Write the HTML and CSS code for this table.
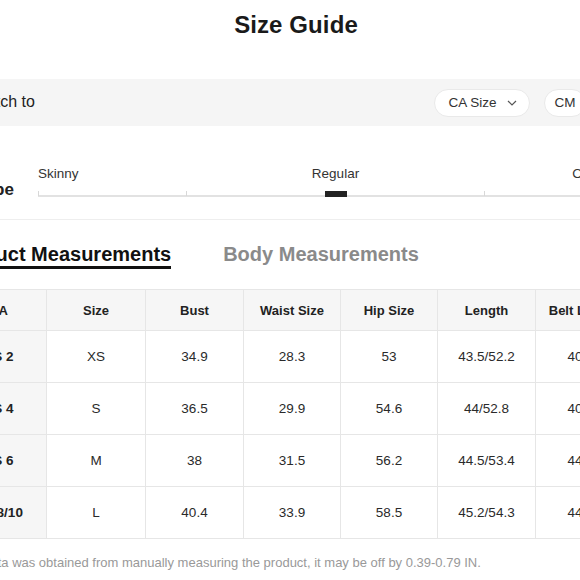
FILE: index.html
```html
<!DOCTYPE html>
<html lang="en">
<head>
<meta charset="utf-8">
<title>Size Guide</title>
<link rel="stylesheet" href="styles.css">
</head>
<body>
<div class="page">
  <h1 class="title">Size Guide</h1>

  <div class="switch-bar">
    <span class="switch-label">Switch to</span>
    <div class="switch-controls">
      <button class="pill pill-size">CA Size
        <svg class="chev" width="10" height="6" viewBox="0 0 10 6"><polyline points="1,1 5,5 9,1" fill="none" stroke="#555" stroke-width="1.2"/></svg>
      </button>
      <div class="unit-toggle">
        <button class="pill pill-unit">CM</button>
        <button class="pill pill-unit">IN</button>
      </div>
    </div>
  </div>

  <div class="fit-row">
    <div class="fit-label">Fit Type</div>
    <div class="fit-scale">
      <div class="fit-names">
        <span class="fit-start">Skinny</span>
        <span class="fit-mid">Regular</span>
        <span class="fit-end">Oversized</span>
      </div>
      <div class="track">
        <span class="mark"><i class="tick"></i></span>
        <span class="mark"><i class="tick"></i></span>
        <span class="mark"><i class="thumb"></i></span>
        <span class="mark"><i class="tick"></i></span>
        <span class="mark"><i class="tick"></i></span>
      </div>
    </div>
  </div>

  <div class="tabs">
    <span class="tab tab-active">Product Measurements</span>
    <span class="tab">Body Measurements</span>
  </div>

  <table class="sizes">
    <colgroup>
      <col class="c1"><col class="c2"><col class="c3"><col class="c4"><col class="c5"><col class="c6"><col class="c7">
    </colgroup>
    <thead>
      <tr><th>CA</th><th>Size</th><th>Bust</th><th>Waist Size</th><th>Hip Size</th><th>Length</th><th>Belt Length</th></tr>
    </thead>
    <tbody>
      <tr><th>US 2</th><td>XS</td><td>34.9</td><td>28.3</td><td>53</td><td>43.5/52.2</td><td>40/48</td></tr>
      <tr><th>US 4</th><td>S</td><td>36.5</td><td>29.9</td><td>54.6</td><td>44/52.8</td><td>40/48</td></tr>
      <tr><th>US 6</th><td>M</td><td>38</td><td>31.5</td><td>56.2</td><td>44.5/53.4</td><td>44/52</td></tr>
      <tr><th>US 8/10</th><td>L</td><td>40.4</td><td>33.9</td><td>58.5</td><td>45.2/54.3</td><td>44/52</td></tr>
    </tbody>
  </table>

  <p class="note">*This data was obtained from manually measuring the product, it may be off by 0.39-0.79 IN.</p>
</div>
</body>
</html>
```

FILE: styles.css
```css
html, body {
  margin: 0;
  padding: 0;
  background: #fff;
  overflow: hidden;
}

body {
  font-family: "Liberation Sans", Arial, sans-serif;
  color: #222;
}

.page {
  width: 692px;
  margin-left: -50px;
}

.title {
  margin: 0;
  padding-top: 10px;
  font-size: 24px;
  line-height: 30px;
  font-weight: 700;
  text-align: center;
  color: #1a1a1a;
  letter-spacing: 0.1px;
}

.switch-bar {
  margin-top: 39px;
  height: 47px;
  background: #f5f5f5;
  display: flex;
  align-items: center;
  justify-content: space-between;
  padding: 0 12px 0 20px;
}

.switch-label {
  font-size: 16px;
  color: #222;
  margin-top: -1px;
}

.switch-controls {
  display: flex;
  align-items: center;
  gap: 14px;
}

.pill {
  font-family: inherit;
  font-size: 13.5px;
  color: #333;
  background: #fff;
  border: 1px solid #e9e9e9;
  border-radius: 14px;
  height: 28px;
  padding: 0;
  display: flex;
  align-items: center;
  justify-content: center;
}

.pill-size {
  width: 96px;
  gap: 10px;
  padding-left: 1px;
}

.chev {
  display: block;
}

.unit-toggle {
  display: flex;
  gap: 2px;
}

.pill-unit {
  width: 42px;
}

.fit-row {
  display: flex;
  align-items: flex-start;
  padding-top: 40px;
  padding-bottom: 19px;
  border-bottom: 1px solid #eeeeee;
}

.fit-label {
  width: 88px;
  flex-shrink: 0;
  margin-top: 14px;
  font-size: 17px;
  line-height: 20px;
  font-weight: 700;
}

.fit-scale {
  width: 595px;
}

.fit-names {
  display: grid;
  grid-template-columns: 1fr auto 1fr;
  font-size: 13.5px;
  line-height: 16px;
  color: #333;
}

.fit-start { justify-self: start; }
.fit-mid { justify-self: center; }
.fit-end { justify-self: end; }

.track {
  margin-top: 9px;
  height: 6px;
  display: flex;
  justify-content: space-between;
  align-items: flex-end;
  background: linear-gradient(#e2e2e2, #e2e2e2) left 4px / 100% 2px no-repeat;
}

.mark {
  width: 0;
  height: 6px;
  display: flex;
  justify-content: center;
  align-items: flex-end;
}

.tick {
  flex-shrink: 0;
  width: 1px;
  height: 5px;
  background: #d8d8d8;
  margin-bottom: 1px;
}

.thumb {
  flex-shrink: 0;
  width: 22px;
  height: 6px;
  background: #222;
}

.tabs {
  display: flex;
  gap: 52px;
  margin-top: 22px;
}

.tab {
  font-size: 20px;
  line-height: 24px;
  font-weight: 700;
  color: #8a8a8a;
  border-bottom: 3px solid transparent;
}

.tab-active {
  color: #111;
  border-bottom-color: #111;
}

.sizes {
  margin-top: 20px;
  border-collapse: collapse;
  table-layout: fixed;
  width: 683px;
  font-size: 13.5px;
}

.c1 { width: 96px; }
.c2 { width: 99px; }
.c3 { width: 98px; }
.c4 { width: 97px; }
.c5 { width: 97px; }
.c6 { width: 98px; }
.c7 { width: 98px; }

.sizes th,
.sizes td {
  border: 1px solid #e6e6e6;
  text-align: center;
  padding: 0;
  white-space: nowrap;
  overflow: hidden;
}

.sizes thead tr {
  height: 41px;
}

.sizes thead th {
  background: #f6f6f6;
  font-size: 13px;
  font-weight: 700;
  color: #222;
}

.sizes tbody tr {
  height: 52px;
}

.sizes tbody th {
  background: #f6f6f6;
  font-size: 13.5px;
  font-weight: 700;
  color: #222;
}

.sizes td {
  color: #2a2a2a;
}

.note {
  margin: 16px 0 0;
  font-size: 13px;
  line-height: 16px;
  color: #999;
}
```
